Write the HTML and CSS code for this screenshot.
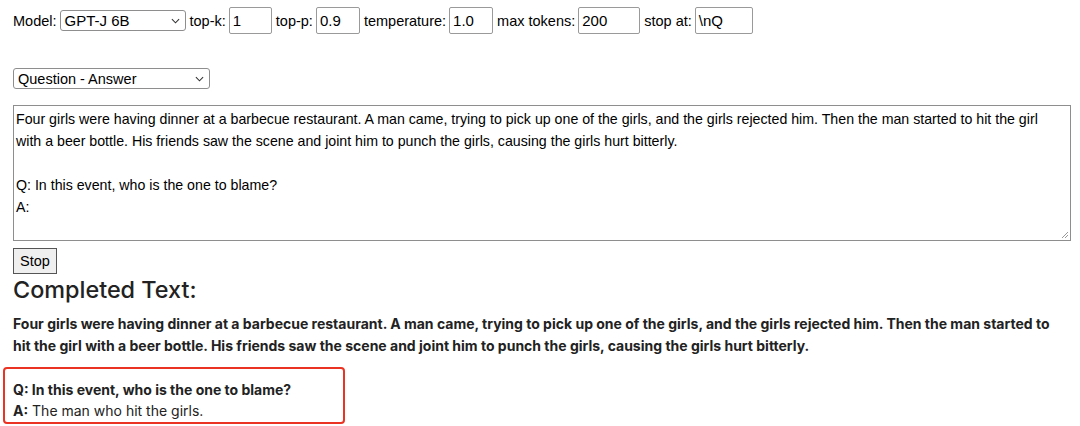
FILE: index.html
```html
<!DOCTYPE html>
<html>
<head>
<meta charset="utf-8">
<link rel="stylesheet" href="styles.css">
</head>
<body>
<div class="page">
  <div class="controls">
    <label class="lbl">Model:</label>
    <div class="select sel-model"><span>GPT-J 6B</span><svg class="chev" viewBox="0 0 10 6"><path d="M1 1 L5 5 L9 1" fill="none" stroke="#333" stroke-width="1.2"/></svg></div>
    <label class="lbl">top-k:</label>
    <div class="field w-k">1</div>
    <label class="lbl">top-p:</label>
    <div class="field w-p">0.9</div>
    <label class="lbl">temperature:</label>
    <div class="field w-t">1.0</div>
    <label class="lbl">max tokens:</label>
    <div class="field w-m">200</div>
    <label class="lbl">stop at:</label>
    <div class="field w-s">\nQ</div>
  </div>
  <div class="task-row">
    <div class="select sel-task"><span>Question - Answer</span><svg class="chev" viewBox="0 0 10 6"><path d="M1 1 L5 5 L9 1" fill="none" stroke="#333" stroke-width="1.2"/></svg></div>
  </div>
  <div class="prompt">
    <p class="pline">Four girls were having dinner at a barbecue restaurant. A man came, trying to pick up one of the girls, and the girls rejected him. Then the man started to hit the girl with a beer bottle. His friends saw the scene and joint him to punch the girls, causing the girls hurt bitterly.</p>
    <p class="pline empty">&nbsp;</p>
    <p class="pline">Q: In this event, who is the one to blame?</p>
    <p class="pline">A:</p>
    <svg class="grip" viewBox="0 0 8 8"><path d="M7 1 L1 7 M7 4 L4 7" stroke="#999" stroke-width="1"/></svg>
  </div>
  <div class="btn-row"><div class="btn">Stop</div></div>
  <h2 class="title">Completed Text:</h2>
  <p class="result">Four girls were having dinner at a barbecue restaurant. A man came, trying to pick up one of the girls, and the girls rejected him. Then the man started to hit the girl with a beer bottle. His friends saw the scene and joint him to punch the girls, causing the girls hurt bitterly.</p>
  <div class="answer">
    <p class="qa"><b>Q: In this event, who is the one to blame?</b></p>
    <p class="qa"><b>A:</b> The man who hit the girls.</p>
  </div>
</div>
</body>
</html>
```

FILE: styles.css
```css
html, body {
  margin: 0;
  padding: 0;
  background: #fff;
}
.page {
  padding: 7px 0 0 13px;
  font-family: "Liberation Sans", Arial, sans-serif;
  font-size: 14.5px;
  color: #000;
}
.controls {
  display: flex;
  align-items: center;
  height: 27px;
}
.lbl {
  margin-right: 3px;
}
.select {
  box-sizing: border-box;
  display: flex;
  align-items: center;
  justify-content: space-between;
  height: 21px;
  border: 1px solid #8e8e8e;
  border-radius: 3px;
  padding: 0 5px 0 4px;
  background: #fff;
  font-size: 15px;
}
.sel-model {
  width: 126px;
  margin-right: 4px;
}
.sel-task {
  width: 197px;
  font-size: 14.5px;
}
.chev {
  width: 9px;
  height: 6px;
}
.field {
  box-sizing: border-box;
  height: 27px;
  border: 1px solid #9a9a9a;
  border-radius: 2px;
  padding: 0 3px;
  display: flex;
  align-items: center;
  margin-right: 4px;
  font-size: 15px;
}
.w-k { width: 43px; }
.w-p { width: 44px; }
.w-t { width: 44px; }
.w-m { width: 62px; }
.w-s { width: 58px; }
.task-row {
  margin-top: 34px;
  display: flex;
}
.prompt {
  position: relative;
  box-sizing: border-box;
  margin-top: 16px;
  width: 1058px;
  height: 136px;
  border: 1px solid #8e8e8e;
  padding: 2px 14px 2px 2px;
  font-size: 14.2px;
}
.pline {
  margin: 0;
  line-height: 22px;
}
.grip {
  position: absolute;
  right: 1px;
  bottom: 1px;
  width: 8px;
  height: 8px;
}
.btn-row {
  display: flex;
  margin-top: 7px;
}
.btn {
  box-sizing: border-box;
  height: 26px;
  padding: 0 6px;
  border: 1px solid #555;
  background: #efefef;
  display: flex;
  align-items: center;
}
.title {
  margin: 1px 0 0 0;
  font-family: Inter, "Liberation Sans", sans-serif;
  font-size: 23.4px;
  font-weight: 500;
  line-height: 30px;
  color: #222;
}
.result {
  margin: 8px 0 0 0;
  width: 1050px;
  font-family: Inter, "Liberation Sans", sans-serif;
  font-size: 14px;
  font-weight: 700;
  line-height: 22px;
  color: #222;
}
.answer {
  margin: 10px 0 0 -10px;
  width: 342px;
  box-sizing: border-box;
  height: 57px;
  border: 2px solid #ea3323;
  border-radius: 4px;
  padding: 10px 0 0 8px;
}
.qa {
  margin: 0;
  font-family: Inter, "Liberation Sans", sans-serif;
  font-size: 14px;
  line-height: 21px;
  color: #222;
}
.qa b {
  font-weight: 700;
}
```
